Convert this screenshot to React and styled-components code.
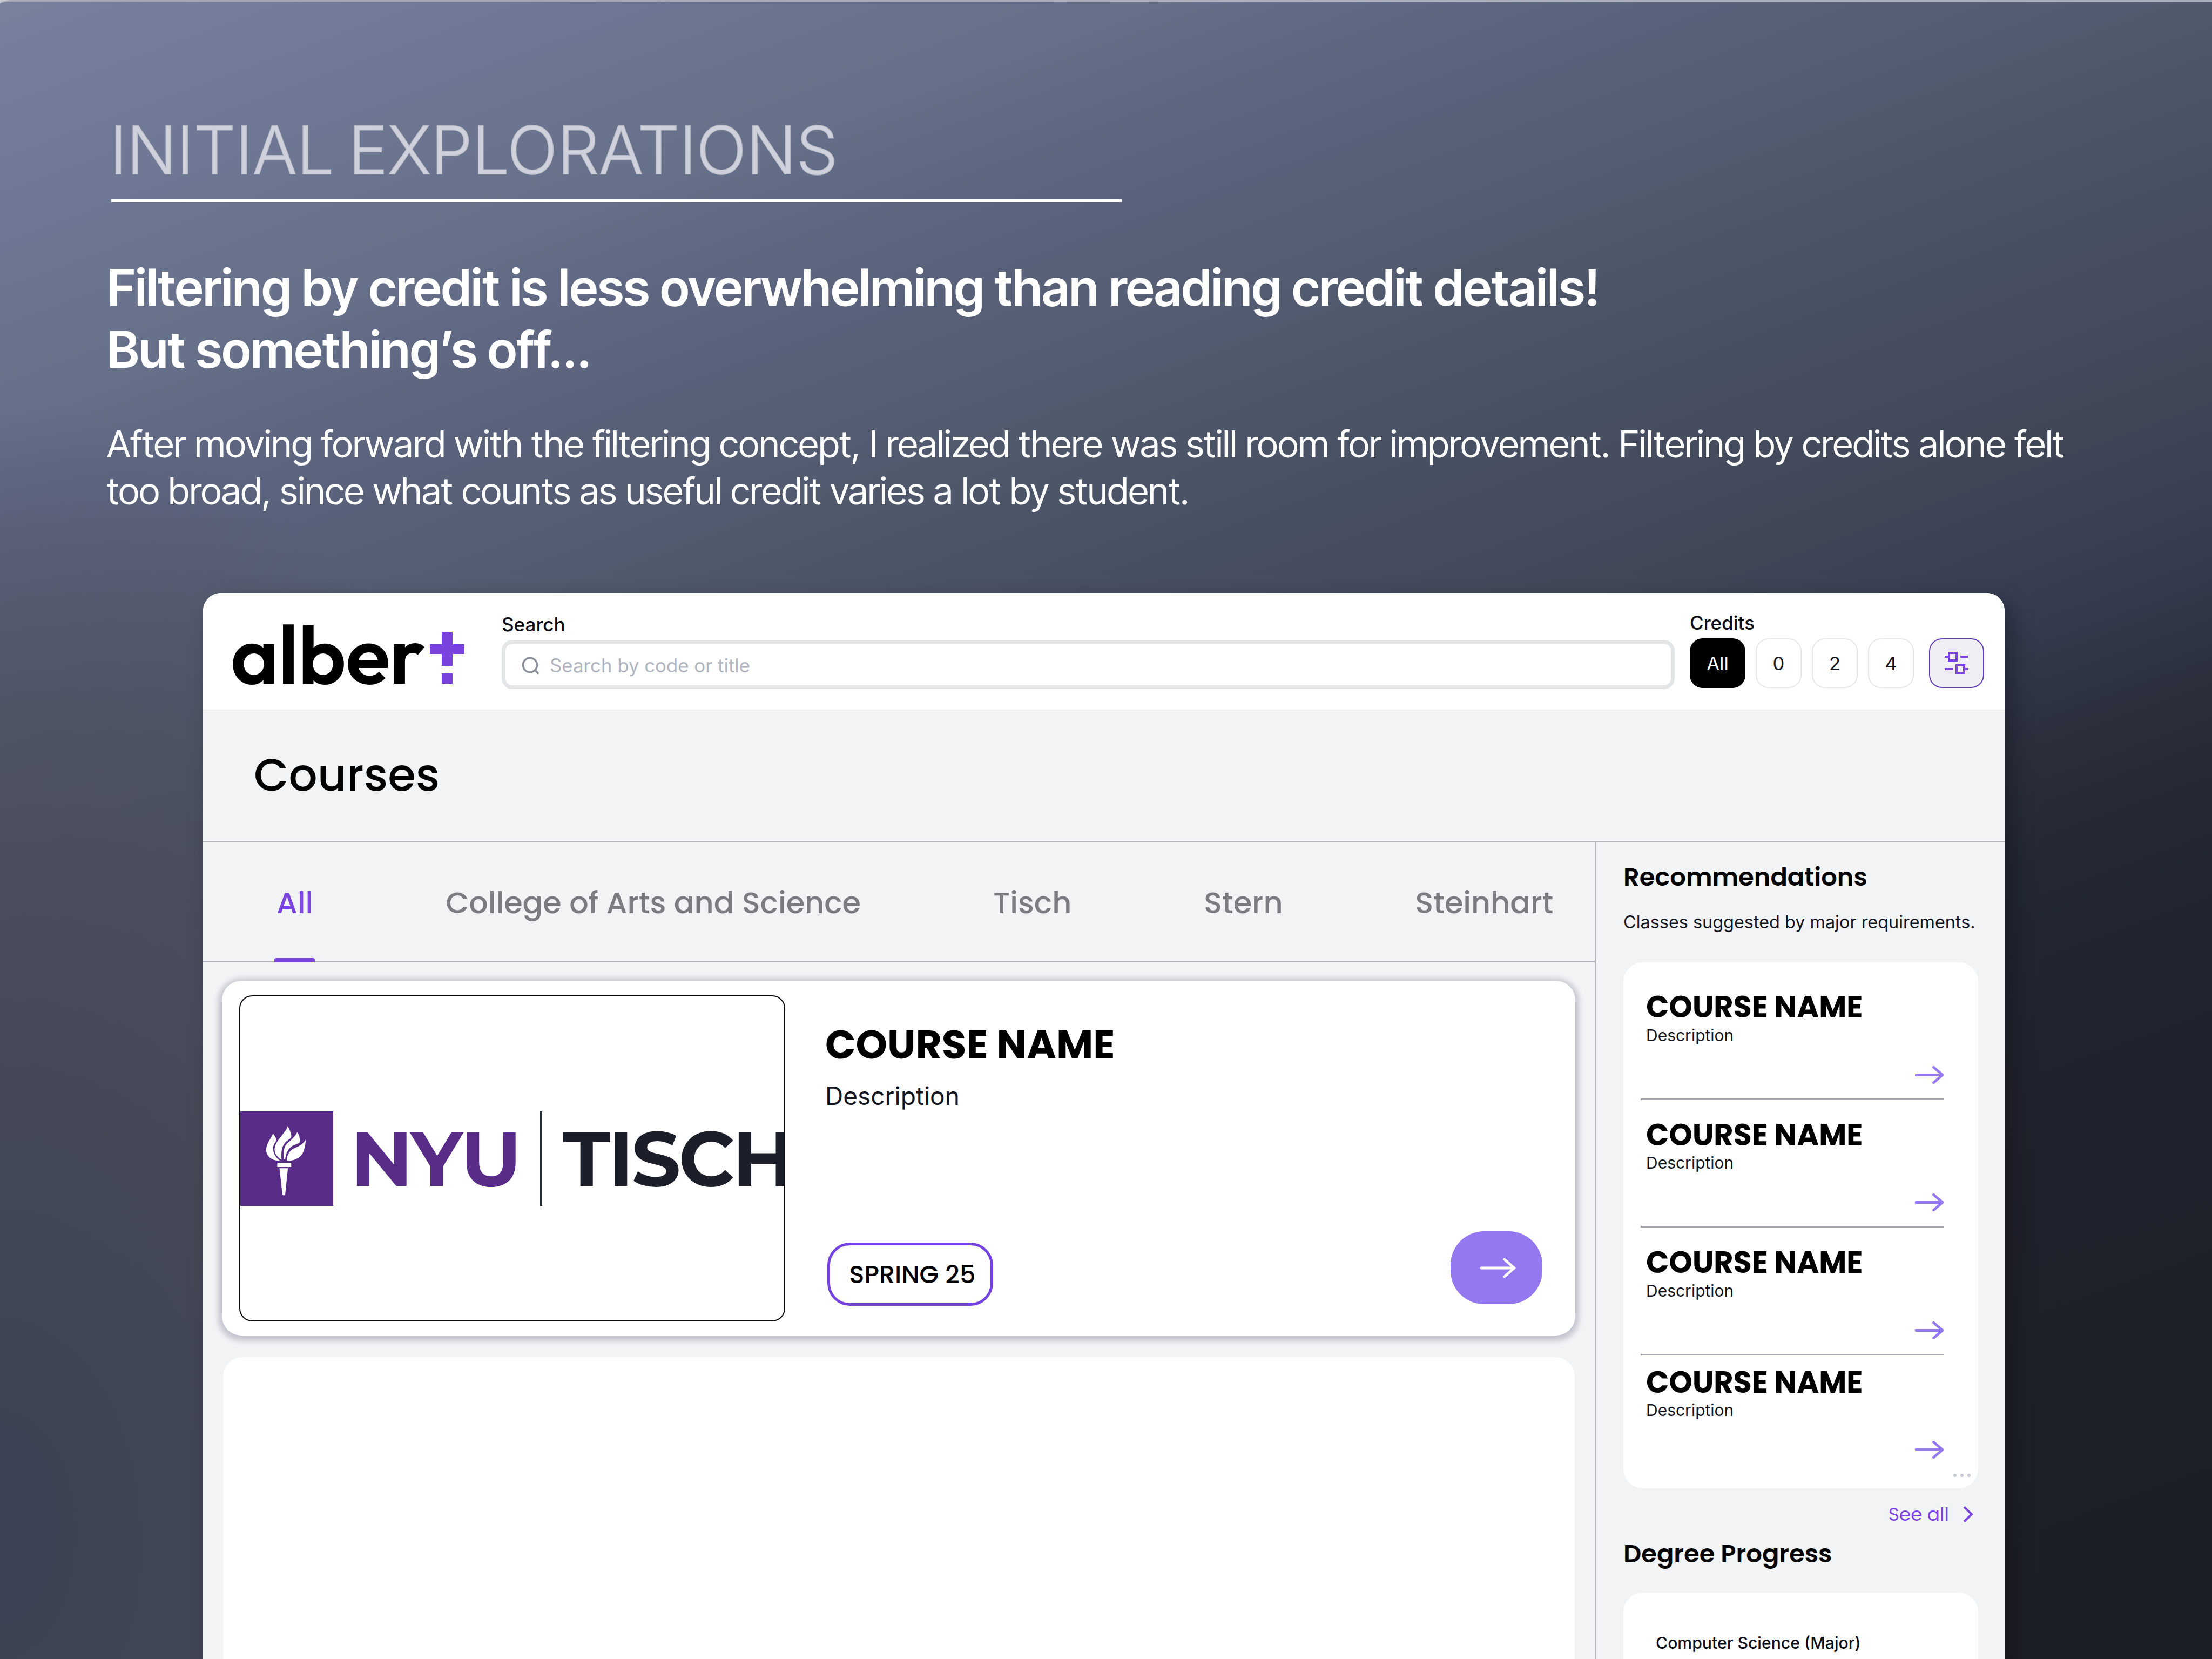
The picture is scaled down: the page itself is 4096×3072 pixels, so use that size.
import styled, { createGlobalStyle } from 'styled-components';

const GlobalStyle = createGlobalStyle`
  * { box-sizing: border-box; }
  body {
    margin: 0;
    background: #c9cad0;
    font-family: Inter, "Liberation Sans", sans-serif;
  }
  h1, h2, h3, p { margin: 0; }
`;

const poppins = `font-family: Poppins, Inter, "Liberation Sans", sans-serif;`;

const Page = styled.div`
  width: 4096px;
  height: 3072px;
  overflow: hidden;
  display: flex;
  flex-direction: column;
  border-top: 3px solid #a9adb9;
  border-top-left-radius: 24px 7px;
  background:
    radial-gradient(ellipse 30% 68% at 0% 92%, rgba(60, 66, 84, 1) 0%, rgba(69, 73, 86, 0.95) 38%, rgba(75, 77, 90, 0.8) 60%, rgba(78, 82, 98, 0) 100%),
    linear-gradient(160deg, #78819c 0%, #727b98 5.5%, #667089 17%, #5f6782 21%, #50596c 33%, #474f62 40%, #404858 47.6%, #353c4e 55%, #2c303d 60%, #242833 65%, #1f212c 77%, #1c1e27 100%);
`;

const Intro = styled.div`
  padding: 205px 0 0 199px;
  color: white;
`;

const Eyebrow = styled.h1`
  margin-left: 4px;
  font-size: 122.6px;
  line-height: 140px;
  font-weight: 300;
  letter-spacing: -0.6px;
  word-spacing: -7px;
  color: #cfd2dc;
  -webkit-text-stroke: 1.8px rgba(196, 199, 208, 0.8);
`;

const Rule = styled.div`
  width: 1871px;
  height: 5px;
  margin: 21px 0 0 7px;
  background: white;
`;

const Headline = styled.h2`
  font-family: 'Inter Tight', Inter, sans-serif;
  font-size: 93.85px;
  line-height: 114.7px;
  font-weight: 600;
  margin-top: 101px;
`;

const Lead = styled.p`
  font-family: 'Inter Tight', Inter, sans-serif;
  font-size: 69.2px;
  line-height: 87px;
  margin: 75px 0 0 -1px;
`;

const Window = styled.div`
  width: 3336px;
  height: 2100px;
  flex-shrink: 0;
  margin: 145px 0 0 376px;
  border-radius: 33px 33px 0 0;
  overflow: hidden;
  background: #f2f3f5;
  box-shadow: 14px 16px 40px rgba(5, 6, 14, 0.34);
  display: flex;
  flex-direction: column;
`;

const Header = styled.div`
  height: 217px;
  flex-shrink: 0;
  display: flex;
  align-items: flex-start;
  padding-left: 50px;
  background: white;
  border-bottom: 1px solid #e9eaed;
`;

const Logo = styled.div`
  width: 503px;
  display: flex;
  align-items: flex-start;
  svg { margin: 72px 0 0 10px; }
`;

const LogoText = styled.div`
  width: 360px;
  padding-left: 1px;
  font-family: Outfit, Poppins, Inter, sans-serif;
  font-size: 151.5px;
  line-height: 160px;
  font-weight: 600;
  letter-spacing: -0.8px;
  margin-top: 32px;
`;

const Field = styled.div`
  width: 2172px;
  padding-top: 38px;
`;

const Label = styled.div`
  font-size: 35px;
  line-height: 40px;
  font-weight: 500;
  color: #0b0d14;
`;

const SearchBox = styled.div`
  height: 91px;
  margin-top: 9px;
  border: 7px solid #e4e5e7;
  border-radius: 20px;
  display: flex;
  align-items: center;
  padding: 3px 0 0 30px;
  font-size: 34.8px;
  color: #b0b4be;
  svg { margin: 0 19px 0 0; }
`;

const Credits = styled.div`
  padding: 35px 0 0 28px;
`;

const Chips = styled.div`
  display: flex;
  gap: 18.6px;
  margin-top: 9px;
`;

const Chip = styled.div`
  width: ${(p) => (p.$active ? 103 : 85.5)}px;
  height: 92px;
  border-radius: 24px;
  border: 2px solid ${(p) => (p.$active ? '#000' : '#e6e7ea')};
  background: ${(p) => (p.$active ? '#000' : '#fff')};
  color: ${(p) => (p.$active ? '#fff' : '#14161d')};
  font-size: 34.6px;
  display: flex;
  align-items: center;
  justify-content: center;
`;

const FilterButton = styled.div`
  width: 102px;
  height: 92px;
  margin-left: 9px;
  border-radius: 24px;
  border: 2.5px solid #6540b4;
  background: #f0f0f4;
  display: flex;
  align-items: center;
  justify-content: center;
`;

const TitleBar = styled.div`
  ${poppins}
  height: 245px;
  flex-shrink: 0;
  padding: 59.5px 0 0 94px;
  border-bottom: 3px solid #b0b2b9;
  font-size: 83.4px;
  line-height: 120px;
  font-weight: 500;
`;

const Body = styled.div`
  display: flex;
  flex: 1;
`;

const Main = styled.div`
  width: 2580px;
  border-right: 3px solid #b3b5bc;
`;

const Tabs = styled.div`
  height: 222px;
  display: flex;
  gap: 245px;
  padding: 72px 0 0 136px;
  border-bottom: 3px solid #b3b5bc;
`;

const Tab = styled.div`
  ${poppins}
  position: relative;
  height: 150px;
  font-size: 55.7px;
  line-height: 80px;
  font-weight: 500;
  white-space: nowrap;
  color: ${(p) => (p.$active ? '#7a43e0' : '#7b7c80')};
  &::after {
    content: '';
    display: ${(p) => (p.$active ? 'block' : 'none')};
    position: absolute;
    left: -4px;
    bottom: 0;
    width: 75px;
    height: 8px;
    border-radius: 4px 4px 0 0;
    background: #7a43e0;
  }
`;

const CourseCard = styled.div`
  width: ${(p) => (p.$raised ? 2506 : 2503)}px;
  height: 657px;
  margin: ${(p) => (p.$raised ? '34px 0 0 35px' : '40px 0 0 37px')};
  border-radius: 36px;
  background: white;
  box-shadow: ${(p) => (p.$raised ? '0 3px 10px 7px rgba(60, 60, 90, 0.24)' : 'none')};
  display: flex;
`;

const Thumb = styled.div`
  width: 1011px;
  height: 604px;
  margin: 27px 0 0 32px;
  border: 2.4px solid #0a0b12;
  border-radius: 24px;
  overflow: hidden;
  display: flex;
  align-items: center;
  font-family: Montserrat, Poppins, sans-serif;
  font-size: 143px;
  line-height: 174px;
  font-weight: 700;
`;

const Nyu = styled.div`
  width: 383px;
  flex-shrink: 0;
  padding-left: 32px;
  letter-spacing: -2.6px;
  color: #582c87;
`;

const Bar = styled.div`
  width: 4px;
  height: 175px;
  flex-shrink: 0;
  background: #252a38;
`;

const School = styled.div`
  padding-left: 38px;
  letter-spacing: -4px;
  color: #1c1f2a;
`;

const Info = styled.div`
  flex: 1;
  display: flex;
  flex-direction: column;
  align-items: flex-start;
  padding: 73px 0 55px 74px;
`;

const CourseName = styled.h3`
  ${poppins}
  font-size: ${(p) => (p.$small ? 55.6 : 74.3)}px;
  line-height: ${(p) => (p.$small ? 60 : 90)}px;
  font-weight: 700;
`;

const Description = styled.p`
  font-size: ${(p) => (p.$small ? 30 : 46)}px;
  line-height: ${(p) => (p.$small ? 36 : 60)}px;
  margin-top: ${(p) => (p.$small ? 3.5 : 20)}px;
  color: #14161f;
`;

const Term = styled.div`
  ${poppins}
  width: 307px;
  height: 117px;
  margin: auto 0 0 4px;
  padding-left: 8px;
  border: 5px solid #7442de;
  border-radius: 42px;
  display: flex;
  align-items: center;
  justify-content: center;
  font-size: 46.2px;
  font-weight: 500;
`;

const GoButton = styled.div`
  width: 170px;
  height: 135px;
  margin: auto 61px 58px 0;
  padding-left: 5px;
  border-radius: 62px;
  background: #9478ef;
  display: flex;
  align-items: center;
  justify-content: center;
`;

const Sidebar = styled.div`
  flex: 1;
  padding: 34px 49px 0 50px;
`;

const SideTitle = styled.h2`
  ${poppins}
  font-size: 46.4px;
  line-height: 60px;
  font-weight: 600;
`;

const SideNote = styled.p`
  margin: 32px 0 52px;
  font-size: 32.4px;
  line-height: 44px;
  white-space: nowrap;
  color: #14161f;
`;

const SideCard = styled.div`
  position: relative;
  height: ${(p) => p.$height}px;
  margin-top: ${(p) => p.$gap || 0}px;
  border-radius: 36px;
  background: white;
  padding: 18px 63px 0 32px;
`;

const RecommendationList = styled.div`
  display: flex;
  flex-direction: column;
`;

const Recommendation = styled.div`
  display: flex;
  flex-direction: column;
  padding: ${(p) => (p.$last ? 20 : 35)}px 0 27px 10px;
  border-bottom: ${(p) => (p.$last ? 'none' : '3px solid #a2a5af')};
  svg { align-self: flex-end; margin-top: 38px; }
`;

const RecommendationText = styled.div`
  height: 100.5px;
`;

const Dots = styled.div`
  position: absolute;
  right: 14px;
  bottom: 21px;
  display: flex;
  gap: 7px;
`;

const Dot = styled.div`
  width: 6px;
  height: 6px;
  border-radius: 50%;
  background: #c6c8d1;
`;

const SeeAll = styled.div`
  ${poppins}
  display: flex;
  align-items: center;
  justify-content: flex-end;
  gap: 26px;
  margin: 26px 9px 21px 0;
  font-size: 34.4px;
  line-height: 44px;
  color: #7a43e0;
`;

const Major = styled.div`
  padding: 55px 0 0 28px;
  font-size: 30.2px;
  line-height: 40px;
  font-weight: 500;
  color: #0d0f16;
`;

const TorchMark = styled.svg`
  flex-shrink: 0;
`;

const Arrow = ({ width, height, color }) => (
  <svg width={width} height={height} viewBox={`0 0 ${width} ${height}`} fill="none" stroke={color} strokeWidth="4.8" strokeLinecap="round" strokeLinejoin="round">
    <path d={`M2 ${height / 2}H${width - 3}M${width - height / 2 - 3} 2.2L${width - 3} ${height / 2}L${width - height / 2 - 3} ${height - 2.2}`} />
  </svg>
);

const Torch = () => (
  <TorchMark width="172" height="175" viewBox="47 185 453 615" preserveAspectRatio="none">
    <rect x="47" y="185" width="453" height="615" fill="#582c87" />
    <g fill="#fff">
      <path d="M207 329C190 375 174 395 173 437C174 475 200 508 240 506C215 480 206 450 207 420C208 395 222 385 222 370C221 352 213 345 207 329Z" />
      <path d="M279 278C270 325 218 370 214 430C214 465 235 490 248 500C246 450 248 420 262 395C275 370 296 365 296 345C293 315 285 300 279 278Z" />
      <path d="M325 319C315 345 300 365 282 385C258 410 255 450 259 497L266 497C268 460 280 430 300 410C318 398 337 395 337 380C338 350 332 335 325 319Z" />
      <path d="M367 367C355 395 335 412 310 425C285 440 275 470 273 506C310 508 335 490 350 460C362 430 364 400 367 367Z" />
      <rect x="227" y="519" width="68" height="28" />
      <path d="M238 555H279L266 725Q258 738 252 725Z" />
    </g>
  </TorchMark>
);

const tabs = ['All', 'College of Arts and Science', 'Tisch', 'Stern', 'Steinhart'];
const recommendations = [1, 2, 3, 4];

function App() {
  return (
    <Page>
      <GlobalStyle />
      <Intro>
        <Eyebrow>INITIAL EXPLORATIONS</Eyebrow>
        <Rule />
        <Headline>
          Filtering by credit is less overwhelming than reading credit details!
          <br />
          But something’s off...
        </Headline>
        <Lead>
          After moving forward with the filtering concept, I realized there was still room for improvement. Filtering by credits alone felt
          <br />
          too broad, since what counts as useful credit varies a lot by student.
        </Lead>
      </Intro>
      <Window>
        <Header>
          <Logo>
            <LogoText>alber</LogoText>
            <svg width="64" height="96" viewBox="0 0 64 96" fill="#7a43e0">
              <rect x="22" y="0" width="20" height="63" />
              <rect x="0" y="23" width="64" height="18" />
              <rect x="22" y="77" width="20" height="19" />
            </svg>
          </Logo>
          <Field>
            <Label>Search</Label>
            <SearchBox>
              <svg width="33" height="33" viewBox="0 0 33 33" fill="none" stroke="#8b8f9b" strokeWidth="3.6" strokeLinecap="round">
                <circle cx="15.5" cy="15.5" r="13" />
                <path d="M25 25L30 30.5" />
              </svg>
              Search by code or title
            </SearchBox>
          </Field>
          <Credits>
            <Label>Credits</Label>
            <Chips>
              <Chip $active>All</Chip>
              <Chip>0</Chip>
              <Chip>2</Chip>
              <Chip>4</Chip>
              <FilterButton>
                <svg width="44" height="44" viewBox="0 0 44 44" fill="none" stroke="#7a43e0" strokeWidth="4">
                  <rect x="8" y="3" width="14" height="14" />
                  <path d="M0 10H8M29 10H43" />
                  <rect x="22" y="26" width="14" height="14" />
                  <path d="M0 33H15M36 33H43" />
                </svg>
              </FilterButton>
            </Chips>
          </Credits>
        </Header>
        <TitleBar>Courses</TitleBar>
        <Body>
          <Main>
            <Tabs>
              {tabs.map((name, i) => (
                <Tab key={name} $active={i === 0}>{name}</Tab>
              ))}
            </Tabs>
            <CourseCard $raised>
              <Thumb>
                <Torch />
                <Nyu>NYU</Nyu>
                <Bar />
                <School>TISCH</School>
              </Thumb>
              <Info>
                <CourseName>COURSE NAME</CourseName>
                <Description>Description</Description>
                <Term>SPRING 25</Term>
              </Info>
              <GoButton>
                <Arrow width={66} height={36} color="#fff" />
              </GoButton>
            </CourseCard>
            <CourseCard />
          </Main>
          <Sidebar>
            <SideTitle>Recommendations</SideTitle>
            <SideNote>Classes suggested by major requirements.</SideNote>
            <SideCard $height={974}>
              <RecommendationList>
                {recommendations.map((id, i) => (
                  <Recommendation key={id} $last={i === 3}>
                    <RecommendationText>
                      <CourseName $small>COURSE NAME</CourseName>
                      <Description $small>Description</Description>
                    </RecommendationText>
                    <Arrow width={54} height={33} color="#9478ef" />
                  </Recommendation>
                ))}
              </RecommendationList>
              <Dots>
                <Dot />
                <Dot />
                <Dot />
              </Dots>
            </SideCard>
            <SeeAll>
              See all
              <svg width="19" height="30" viewBox="0 0 19 30" fill="none" stroke="#7a43e0" strokeWidth="4">
                <path d="M2 1.5L16 15L2 28.5" />
              </svg>
            </SeeAll>
            <SideTitle>Degree Progress</SideTitle>
            <SideCard $height={400} $gap={42}>
              <Major>Computer Science (Major)</Major>
            </SideCard>
          </Sidebar>
        </Body>
      </Window>
    </Page>
  );
}

export default App;
